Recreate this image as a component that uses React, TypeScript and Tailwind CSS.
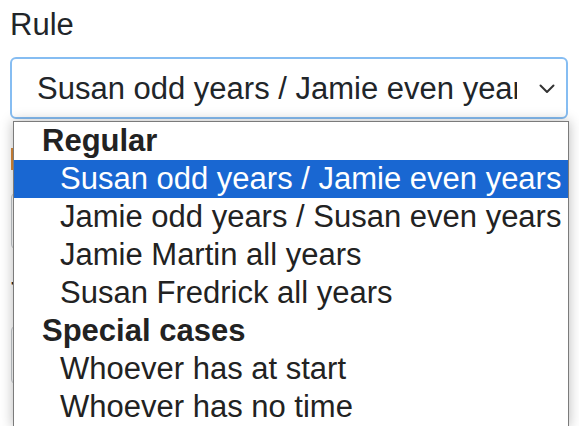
import React from "react";

type Item = { label: string; group?: boolean; selected?: boolean };

const items: Item[] = [
  { label: "Regular", group: true },
  { label: "Susan odd years / Jamie even years", selected: true },
  { label: "Jamie odd years / Susan even years" },
  { label: "Jamie Martin all years" },
  { label: "Susan Fredrick all years" },
  { label: "Special cases", group: true },
  { label: "Whoever has at start" },
  { label: "Whoever has no time" },
];

function Chevron() {
  return (
    <svg width="16" height="10" viewBox="0 0 16 10" className="shrink-0">
      <polyline
        points="1.5,1.5 8,8 14.5,1.5"
        fill="none"
        stroke="#333"
        strokeWidth="2"
        strokeLinecap="round"
        strokeLinejoin="round"
      />
    </svg>
  );
}

export default function App() {
  return (
    <div className="relative h-[426px] w-[579px] overflow-hidden bg-white font-['Liberation_Sans',Arial,sans-serif] text-[31px] text-[#212529]">
      {/* form underneath the open popup */}
      <div className="pl-[10px] pt-[2px] w-[568px]">
        <label className="block leading-[45px]">Rule</label>
        <div className="mt-[10px] flex h-[62px] items-center rounded-[6px] border-2 border-[#86bdf2] pl-[25px] pr-[10px]">
          <span className="w-[480px] shrink-0 overflow-hidden whitespace-nowrap leading-[38px] pt-[2px]">
            Susan odd years / Jamie even years
          </span>
          <span className="ml-auto mr-[1px] mt-[1px] flex">
            <Chevron />
          </span>
        </div>
        <div className="ml-[1px] mt-[29px] h-[22px] border-l-[3px] border-[#d98a3a]" />
        <div className="ml-[1px] mt-[22px] h-[58px] rounded-[6px] border border-[#c4c8cc]" />
        <label className="block pl-[1px] mt-[21px] leading-[45px]">Time</label>
        <div className="ml-[1px] mt-[9px] h-[60px] rounded-[6px] border border-[#c4c8cc]" />
      </div>

      {/* open select popup */}
      <div className="absolute left-[13px] top-[121px] w-[556px] border border-[#7b7b7b] bg-white text-[#222] shadow-[0_0_12px_rgba(0,0,0,0.28)]">
        {items.map((it) =>
          it.group ? (
            <div key={it.label} className="h-[38px] pl-[28px] font-bold leading-[38px]">
              {it.label}
            </div>
          ) : (
            <div
              key={it.label}
              className={
                it.selected
                  ? "h-[38px] bg-[#1967d2] pl-[46px] leading-[38px] text-white whitespace-nowrap"
                  : "h-[38px] pl-[46px] leading-[38px] whitespace-nowrap"
              }
            >
              {it.label}
            </div>
          )
        )}
      </div>
    </div>
  );
}
